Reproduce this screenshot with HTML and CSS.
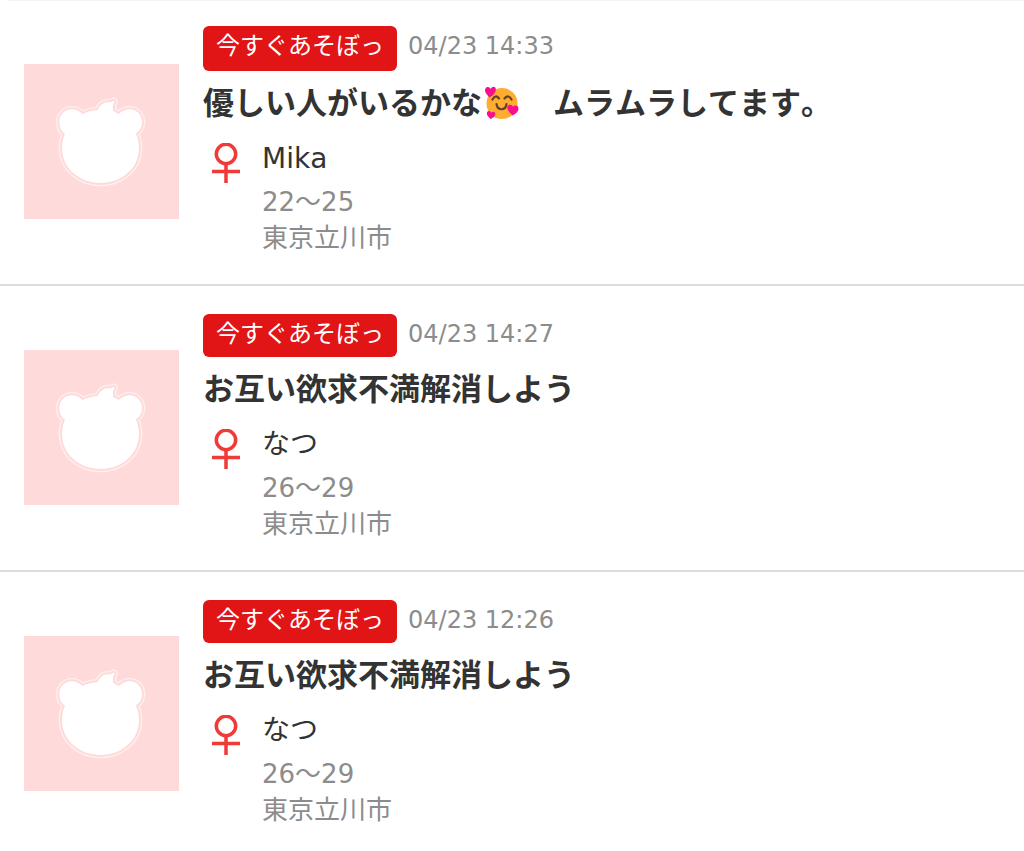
FILE: index.html
```html
<!DOCTYPE html>
<html lang="ja">
<head>
<meta charset="utf-8">
<meta name="viewport" content="width=device-width, initial-scale=1">
<title>今すぐあそぼっ</title>
<link rel="stylesheet" href="styles.css">
</head>
<body>
<svg class="sprite" aria-hidden="true">
  <symbol id="bear" viewBox="72 192 465 465">
    <g id="bear-shape">
      <path d="M247 342C262 335 279 331 293 330C300 315 312 305 327 307C334 309 334 301 342 303C346 306 338 312 339 320V332L356 342C366 333 377 328 389 328C411 328 426 346 426 366C426 382 419 393 407 400C414 414 417 428 417 444C417 505 365 549 302 549C238 549 186 505 186 444C186 428 189 414 195 401C184 395 178 382 178 366C178 345 194 328 215 328C228 328 239 333 247 342Z"/>
    </g>
  </symbol>
  <symbol id="female" viewBox="0 0 28 40">
    <g fill="none" stroke="#f03a38" stroke-width="3.500">
      <circle cx="14" cy="11" r="9.700"/>
      <path d="M14 20.500V40M0 28.500H28"/>
    </g>
  </symbol>
</svg>
<ul class="posts">
  <li class="post post-first">
    <svg class="avatar" viewBox="72 192 465 465" aria-hidden="true">
      <use class="bear-rim" href="#bear-shape"/><use class="bear-gap" href="#bear-shape"/><use class="bear-face" href="#bear-shape"/>
    </svg>
    <div class="content">
      <div class="meta"><span class="badge">今すぐあそぼっ</span><time class="date">04/23 14:33</time></div>
      <h2 class="title">優しい人がいるかな<svg class="emoji" viewBox="0 0 34 34" role="img" aria-label="ハートに囲まれた笑顔">
        <circle cx="17" cy="17.500" r="15.500" fill="#ffac33"/>
        <path d="M7.500 13.500Q10.500 8 14 12.500M19.500 12.500Q23.500 8 26.500 13.500M11.500 18C12.500 25 20.500 25 21.500 18" fill="none" stroke="#664127" stroke-width="2.200" stroke-linecap="round"/>
        <path d="M4.500 11.500C1 8 -1 5 0.500 2.500C2 0 5 1 5.700 3C7 0 10.500 0 10.800 3C11.200 6.500 7.500 9.500 4.500 11.500Z" fill="#fb0d8d"/>
        <path d="M27.500 29.500C24 26 21.500 23.500 22.500 20.500C23.500 18 27 18.200 28 20.800C30 18.500 33.500 19.500 33.500 22.500C33.500 26 30.500 28 27.500 29.500Z" fill="#fb0d8d"/>
        <path d="M5.500 33C2.500 30 1.500 28.500 2 26.500C3 24.200 5.800 25 6.300 26.800C8 24.800 10.500 26 10.300 28.200C10 30.500 7.500 32 5.500 33Z" fill="#fb0d8d"/>
      </svg>　ムラムラしてます。</h2>
      <div class="person">
        <svg class="gender" viewBox="0 0 28 40" role="img" aria-label="女性"><use href="#female"/></svg>
        <div class="profile">
          <p class="name">Mika</p>
          <p class="detail">22～25</p>
          <p class="detail">東京立川市</p>
        </div>
      </div>
    </div>
  </li>
  <li class="post">
    <svg class="avatar" viewBox="72 192 465 465" aria-hidden="true">
      <use class="bear-rim" href="#bear-shape"/><use class="bear-gap" href="#bear-shape"/><use class="bear-face" href="#bear-shape"/>
    </svg>
    <div class="content">
      <div class="meta"><span class="badge">今すぐあそぼっ</span><time class="date">04/23 14:27</time></div>
      <h2 class="title">お互い欲求不満解消しよう</h2>
      <div class="person">
        <svg class="gender" viewBox="0 0 28 40" role="img" aria-label="女性"><use href="#female"/></svg>
        <div class="profile">
          <p class="name">なつ</p>
          <p class="detail">26～29</p>
          <p class="detail">東京立川市</p>
        </div>
      </div>
    </div>
  </li>
  <li class="post">
    <svg class="avatar" viewBox="72 192 465 465" aria-hidden="true">
      <use class="bear-rim" href="#bear-shape"/><use class="bear-gap" href="#bear-shape"/><use class="bear-face" href="#bear-shape"/>
    </svg>
    <div class="content">
      <div class="meta"><span class="badge">今すぐあそぼっ</span><time class="date">04/23 12:26</time></div>
      <h2 class="title">お互い欲求不満解消しよう</h2>
      <div class="person">
        <svg class="gender" viewBox="0 0 28 40" role="img" aria-label="女性"><use href="#female"/></svg>
        <div class="profile">
          <p class="name">なつ</p>
          <p class="detail">26～29</p>
          <p class="detail">東京立川市</p>
        </div>
      </div>
    </div>
  </li>
</ul>
</body>
</html>
```
FILE: styles.css
```css
* {
  box-sizing: border-box;
}

body {
  margin: 0;
  background: #fff;
  color: #333;
  font-family: "DejaVu Sans", "Noto Sans CJK JP", sans-serif;
  font-kerning: none;
}

.sprite {
  position: absolute;
  width: 0;
  height: 0;
}

.posts {
  margin: 0;
  padding: 0;
  list-style: none;
  background: linear-gradient(#f2f2f8, #f2f2f8) 8px 0 / 100% 1px no-repeat;
}

.post {
  display: flex;
  align-items: flex-start;
  gap: 24px;
  padding: 28px 24px;
  border-bottom: 2px solid #dcdcdc;
}

.post-first {
  padding-top: 26px;
}

.post:last-child {
  padding-bottom: 22px;
  border-bottom: 0;
}

.avatar {
  flex: none;
  width: 155px;
  height: 155px;
  margin-top: 36px;
  background: #ffdada;
}

.post-first .avatar {
  margin-top: 38px;
}

.bear-rim {
  fill: #fff0f0;
  stroke: #fff0f0;
  stroke-width: 20;
  stroke-linejoin: round;
}

.bear-gap {
  fill: #ffdada;
  stroke: #ffdada;
  stroke-width: 12;
  stroke-linejoin: round;
}

.bear-face {
  fill: #fff;
}

.content {
  flex: 1;
  min-width: 0;
}

.meta {
  display: flex;
  align-items: flex-start;
  gap: 11px;
  margin-bottom: 12px;
  font-size: 24px;
  line-height: 41px;
}

.badge {
  padding: 0 13px 2px;
  border-radius: 6px;
  background: #e11515;
  color: #fff;
}

.post-first .badge {
  padding-bottom: 4px;
}

.date {
  color: #8c8c8c;
}

.title {
  margin: 0 0 16px;
  font-size: 31px;
  font-weight: 700;
  line-height: 40px;
}

.emoji {
  width: 34px;
  height: 34px;
  margin: 0 3px;
  vertical-align: -6px;
}

.person {
  display: flex;
  align-items: flex-start;
  gap: 22px;
  padding-left: 9px;
}

.gender {
  flex: none;
  width: 28px;
  height: 40px;
  margin-top: 4px;
}

.profile p {
  margin: 0;
}

.profile .name {
  margin-bottom: 5px;
  font-size: 28px;
  line-height: 40px;
}

.detail {
  color: #8c8c8c;
  font-size: 26px;
  line-height: 36px;
}
```
